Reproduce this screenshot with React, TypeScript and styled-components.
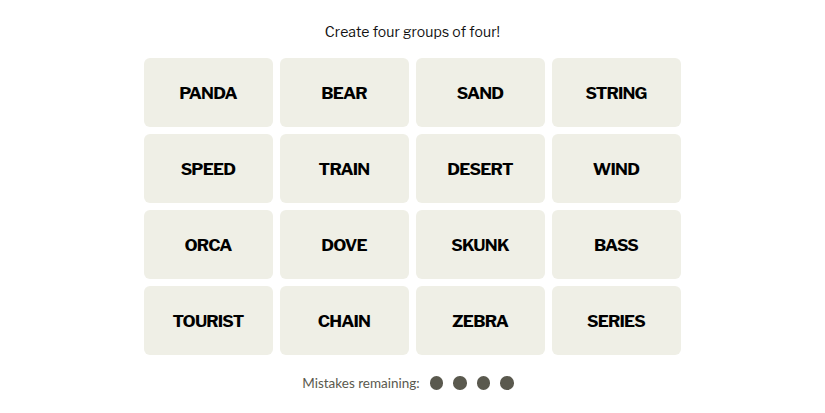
import React from 'react';
import styled, {createGlobalStyle} from 'styled-components';

const GlobalStyle = createGlobalStyle`
  html, body {
    margin: 0;
    padding: 0;
    background: #ffffff;
  }
`;

const Page = styled.div`
  width: 825px;
  height: 413px;
  display: flex;
  flex-direction: column;
  align-items: center;
  font-family: 'Libre Franklin', 'Roboto', 'Liberation Sans', sans-serif;
  color: #000;
  box-sizing: border-box;
  padding-top: 23px;
`;

const Title = styled.h2`
  margin: 0 0 17px;
  font-size: 14px;
  font-weight: 400;
  line-height: 18px;
  color: #111;
  letter-spacing: 0.1px;
`;

const Board = styled.div`
  display: grid;
  grid-template-columns: repeat(4, 129px);
  grid-auto-rows: 69px;
  gap: 7px;
  margin-left: -1px;
`;

const Tile = styled.button`
  border: none;
  border-radius: 6px;
  background: #efefe6;
  font-family: inherit;
  font-size: 17px;
  font-weight: 700;
  color: #000;
  text-transform: uppercase;
  letter-spacing: -0.8px;
  display: flex;
  align-items: center;
  justify-content: center;
  cursor: pointer;
`;

const Mistakes = styled.div`
  margin-top: 20px;
  margin-right: 9px;
  display: flex;
  align-items: center;
  gap: 10px;
  font-size: 13.5px;
  color: #5a594e;
  font-family: 'Lato', 'Liberation Sans', sans-serif;
`;

const Dots = styled.div`
  display: flex;
  gap: 10px;
`;

const Dot = styled.span`
  width: 13.5px;
  height: 13.5px;
  border-radius: 50%;
  background: #5a594e;
`;

const words = [
  'Panda', 'Bear', 'Sand', 'String',
  'Speed', 'Train', 'Desert', 'Wind',
  'Orca', 'Dove', 'Skunk', 'Bass',
  'Tourist', 'Chain', 'Zebra', 'Series',
];

const App = () => {
  return (
    <Page>
      <GlobalStyle />
      <Title>Create four groups of four!</Title>
      <Board>
        {words.map((word) => (
          <Tile key={word}>{word}</Tile>
        ))}
      </Board>
      <Mistakes>
        <span>Mistakes remaining:</span>
        <Dots>
          {[0, 1, 2, 3].map((i) => (
            <Dot key={i} />
          ))}
        </Dots>
      </Mistakes>
    </Page>
  );
};

export default App;
